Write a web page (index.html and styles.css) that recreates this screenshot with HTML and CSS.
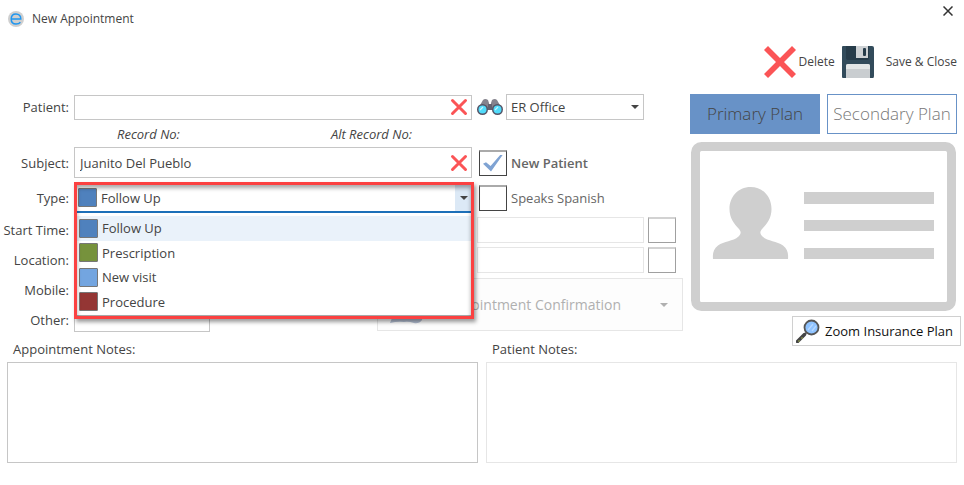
FILE: index.html
```html
<!DOCTYPE html>
<html lang="en">
<head>
<meta charset="utf-8">
<title>New Appointment</title>
<link rel="stylesheet" href="styles.css">
</head>
<body>
<svg class="defs" width="0" height="0" aria-hidden="true">
  <symbol id="cross" viewBox="0 0 32 32"><path d="M4 0 16 12 28 0 32 4 20 16 32 28 28 32 16 20 4 32 0 28 12 16 0 4Z" fill="#fb5456"/></symbol>
  <symbol id="cross-round" viewBox="0 0 18 18"><path d="M2.500 2.500 15.500 15.500M15.500 2.500 2.500 15.500" fill="none" stroke="#fb5456" stroke-width="3" stroke-linecap="round"/></symbol>
</svg>
<header class="titlebar">
  <svg class="logo" width="16" height="16" viewBox="0 0 16 16" aria-hidden="true"><circle cx="8" cy="8" r="8" fill="#cfcfcf"/><path d="M3.200 8H12.800C12.800 4.900 10.900 3 8 3 5.100 3 3.200 5.100 3.200 8 3.200 11 5.100 13 8 13 10 13 11.500 12.400 12.400 11.200" fill="none" stroke="#1e96f0" stroke-width="1.500"/></svg>
  <h1 class="title">New Appointment</h1>
  <button class="close" type="button" aria-label="Close"><svg width="10" height="10" viewBox="0 0 10 10"><path d="M.5.5 9.500 9.500M9.500.5.5 9.500" stroke="#333" stroke-width="1.500"/></svg></button>
</header>
<div class="toolbar">
  <button class="tool" type="button"><svg width="32" height="32"><use href="#cross"/></svg><span>Delete</span></button>
  <button class="tool tool-save" type="button"><svg width="32" height="32" viewBox="0 0 32 32"><path d="M1 0H30Q32 0 32 2V30Q32 32 31 32H1Q0 32 0 31V1Q0 0 1 0Z" fill="#324b5b"/><path d="M4 0H27V12Q27 14 25 14H6Q4 14 4 12Z" fill="#273c4a"/><path d="M14 0H26V12H14Z" fill="#ced2d5"/><rect x="21" y="2" width="3" height="8" rx="1" fill="#273c4a"/><path d="M4 32V20Q4 18 6 18H26Q28 18 28 20V32Z" fill="#c9cdd0"/><path d="M4 23V20Q4 18 6 18H26Q28 18 28 20V23Z" fill="#e3e6e7"/></svg><span>Save &amp; Close</span></button>
</div>
<main class="main">
  <form class="form">
    <label class="label" for="patient">Patient:</label>
    <div class="field low">
      <input class="input" id="patient" type="text">
      <button class="clear" type="button" aria-label="Clear patient"><svg width="18" height="18"><use href="#cross-round"/></svg></button>
    </div>
    <div class="side side-office">
      <button class="find" type="button" aria-label="Find patient"><svg width="26" height="18" viewBox="0 0 26 18"><path d="M2 9 6 2Q8 0 11 2L12 5V12H2ZM24 9 20 2Q18 0 15 2L14 5V12H24Z" fill="#85838d"/><path d="M11 6H15V12H11Z" fill="#64616f"/><circle cx="5.500" cy="11.500" r="5.500" fill="#545365"/><circle cx="20.500" cy="11.500" r="5.500" fill="#545365"/><circle cx="5.500" cy="11.500" r="4" fill="#51dbfa"/><circle cx="20.500" cy="11.500" r="4" fill="#51dbfa"/><path d="M3 12 6 9M18 12 21 9" stroke="#c4f5ff" stroke-width="1.300"/></svg></button>
      <div class="pick">
        <select class="input" aria-label="Office"><option>ER Office</option></select>
        <i class="caret"></i>
      </div>
    </div>

    <div class="records"><span>Record No:</span><span>Alt Record No:</span></div>

    <label class="label" for="subject">Subject:</label>
    <div class="field">
      <input class="input" id="subject" type="text" value="Juanito Del Pueblo">
      <button class="clear" type="button" aria-label="Clear subject"><svg width="18" height="18"><use href="#cross-round"/></svg></button>
    </div>
    <label class="side side-check strong"><input class="check" type="checkbox" checked>New Patient</label>

    <label class="label" for="type">Type:</label>
    <div class="field type">
      <select class="type-select" id="type"><option>Follow Up</option><option>Prescription</option><option>New visit</option><option>Procedure</option></select>
      <i class="swatch blue type-swatch"></i>
      <span class="type-arrow"><i class="caret"></i></span>
      <ul class="menu" role="listbox" aria-label="Type">
        <li class="item current" role="option" aria-selected="true"><i class="swatch blue"></i>Follow Up</li>
        <li class="item" role="option"><i class="swatch green"></i>Prescription</li>
        <li class="item" role="option"><i class="swatch sky"></i>New visit</li>
        <li class="item" role="option"><i class="swatch red"></i>Procedure</li>
      </ul>
      <div class="frame"></div>
    </div>
    <label class="side side-check"><input class="check" type="checkbox">Speaks Spanish</label>

    <label class="label" for="start">Start Time:</label>
    <div class="side side-off">
      <input class="input faint" id="start" type="text" disabled>
      <input class="check off" type="checkbox" aria-label="Use start time" disabled>
    </div>

    <label class="label" for="location">Location:</label>
    <div class="side side-off">
      <input class="input faint" id="location" type="text" disabled>
      <input class="check off" type="checkbox" aria-label="Use location" disabled>
    </div>

    <label class="label row-mobile" for="mobile">Mobile:</label>
    <input class="input short row-mobile" id="mobile" type="text">

    <label class="label row-other" for="other">Other:</label>
    <input class="input short row-other" id="other" type="text">

    <button class="confirm" type="button" disabled>
      <svg width="38" height="38" viewBox="0 0 38 38"><path d="M2 37 8 22H36L34 34Q31 38 26 37 20 35 16 36 10 35 2 37Z" fill="#b4bfd3"/></svg>
      <span>Appointment Confirmation</span><i class="caret"></i>
    </button>
  </form>

  <section class="plan">
    <div class="tabs">
      <button class="tab active" type="button">Primary Plan</button>
      <button class="tab" type="button">Secondary Plan</button>
    </div>
    <svg class="card" viewBox="0 0 265 169" role="img" aria-label="Insurance card"><rect x="4.500" y="4.500" width="256" height="160" rx="6" fill="none" stroke="#cfcfcf" stroke-width="9"/><path d="M113 50H243V62H113ZM113 78H243V89H113ZM113 106H243V117H113Z" fill="#cfcfcf"/><path d="M59.500 45C72 45 80.500 55 80.500 67 80.500 76 76 82 71 87 68.500 90 69 92 71.500 94.500 77 99.500 86 99 92 103.500 96.500 107 97.500 111 97 117H22C21.500 111 22.500 107 27 103.500 33 99 42 99.500 47.500 94.500 50 92 50.500 90 48 87 43 82 38.500 76 38.500 67 38.500 55 47 45 59.500 45Z" fill="#cfcfcf"/></svg>
    <button class="zoom" type="button"><svg width="24" height="24" viewBox="0 0 24 24"><path d="M11 13 7.500 16.500" stroke="#777" stroke-width="2"/><path d="M8.500 15.500 1.500 22.500" stroke="#454545" stroke-width="3.500" stroke-linecap="round"/><path d="M5.500 18.500 6.500 19.500M2.500 21.500 3.500 22.500" stroke="#9aa84a" stroke-width="1.500"/><circle cx="15.500" cy="8.500" r="7" fill="#8fc3ff" stroke="#555" stroke-width="1.800"/><path d="M12 11 17 5M16 12 20 7" stroke="#b7d9ff" stroke-width="1.300"/></svg><span>Zoom Insurance Plan</span></button>
  </section>
</main>
<section class="notes">
  <div class="note"><label for="anotes">Appointment Notes:</label><textarea class="area" id="anotes"></textarea></div>
  <div class="note"><label for="pnotes">Patient Notes:</label><textarea class="area faint" id="pnotes" disabled></textarea></div>
</section>
</body>
</html>
```
FILE: styles.css
```css
* { box-sizing: border-box; }
body {
  margin: 0;
  background: #fff;
  color: #444;
  font: 13px/18px "Open Sans", "Noto Sans", sans-serif;
}
button, input, select, textarea { font: inherit; color: inherit; margin: 0; border-radius: 0; }
button { padding: 0; border: 0; background: none; }
svg { display: block; flex: none; }
.defs { position: absolute; }

.titlebar { display: flex; align-items: center; height: 37px; padding: 0 11px 0 8px; }
.title { margin: 0 auto 0 8px; font-size: 12px; font-weight: 400; }
.close { align-self: flex-start; padding-top: 6px; }

.toolbar { display: flex; justify-content: flex-end; gap: 7px; padding: 9px 7px 16px 0; font-size: 12px; }
.tool { display: flex; align-items: center; gap: 3px; }
.tool-save { gap: 12px; }

.main { display: grid; grid-template-columns: minmax(0, 1fr) 267px; gap: 7px; padding-right: 7px; }

.form {
  display: grid;
  grid-template-columns: 69px minmax(0, 1fr) 206px;
  grid-template-rows: 26px 19px 31px 31px 26px 26px 26px 25px;
  column-gap: 5px;
  row-gap: 4px;
  align-content: start;
}
.label { grid-column: 1; align-self: center; justify-self: end; white-space: nowrap; }
.field { grid-column: 2; position: relative; display: flex; }
.low { padding-top: 1px; }
.side { grid-column: 3; display: flex; align-items: center; }
.input { width: 100%; min-width: 0; height: 100%; padding: 0 5px; border: 1px solid #c6c6c6; background: #fff; appearance: none; outline: 0; }
.faint { border-color: #e6e6e6; }
.clear { position: absolute; right: 4px; top: 50%; margin-top: -9px; }
.caret { width: 0; height: 0; border: 4px solid transparent; border-top-color: #444; border-bottom: 0; }

.side-office { gap: 3px; }
.pick { position: relative; width: 138px; height: 26px; }
.pick .input { padding: 0 4px; }
.pick .caret { position: absolute; right: 5px; top: 11px; }

.records { grid-column: 2; display: flex; align-items: center; font-style: italic; gap: 151px; padding-left: 43px; white-space: nowrap; }

.side-check { gap: 4px; padding-left: 2px; color: #666; white-space: nowrap; }
.strong { font-weight: 600; }
.check {
  flex: none;
  width: 28px;
  height: 26px;
  appearance: none;
  border: 1px solid #444;
  border-top: 2px solid #aaa;
  background: #fff;
}
.check:checked::before {
  content: "";
  display: block;
  width: 20px;
  height: 17px;
  margin: 3px;
  background: #7fa3d3;
  clip-path: polygon(0 55%, 15% 45%, 38% 68%, 88% 0, 100% 0, 40% 100%);
}
.off { border-color: #a0a0a0; border-top-color: #d2d2d2; }

.type { padding: 2px 0 0 2px; }
.type-select { width: 100%; padding: 0 25px; border: 0; border-bottom: 2px solid #1c6fb8; background: #fff; appearance: none; outline: 0; }
.swatch { flex: none; width: 19px; height: 19px; border: 1px solid #777; border-radius: 1px; }
.blue { background: #4f81bd; }
.green { background: #76923c; }
.sky { background: #73a5e0; }
.red { background: #943634; }
.type-swatch { position: absolute; left: 4px; top: 6px; }
.type-arrow { position: absolute; right: 0; top: 2px; bottom: 2px; width: 17px; display: flex; align-items: center; justify-content: center; background: #dce9f6; }
.menu {
  position: absolute;
  z-index: 1;
  left: 2px;
  right: 0;
  top: 100%;
  height: 103px;
  margin: 0;
  padding: 3px 0 1px;
  display: flex;
  flex-direction: column;
  list-style: none;
  background: #fff;
  border-bottom: 1px solid #aaa;
}
.item { flex: 1; display: flex; align-items: center; gap: 4px; padding-left: 3px; }
.current { background: #eaf2fa; }
.frame {
  position: absolute;
  z-index: 2;
  left: 0;
  right: -2px;
  top: 0;
  height: 137px;
  border: 3px solid #fb4141;
  box-shadow: 2px 3px 4px rgba(0, 0, 0, .4), inset 0 3px 4px rgba(0, 0, 0, .35);
  pointer-events: none;
}

.side-off { gap: 4px; }
.side-off .input { width: 167px; }
.short { grid-column: 2; width: 136px; }
.row-mobile { grid-row: 7; }
.row-other { grid-row: 8; }

.confirm {
  grid-column: 2 / 4;
  grid-row: 7 / 9;
  justify-self: end;
  align-self: center;
  display: flex;
  align-items: center;
  width: 306px;
  height: 53px;
  padding: 0 14px 0 10px;
  border: 1px solid #e6e6e6;
  background: #fdfdfd;
  color: #b0b0b0;
  font-size: 14px;
}
.confirm span { margin-left: auto; }
.confirm .caret { margin-left: 39px; border-top-color: #b0b0b0; }

.plan { display: flex; flex-direction: column; }
.tabs { display: grid; grid-template-columns: 1fr 1fr; gap: 7px; }
.tab { height: 40px; border: 1px solid #6892c7; color: #777; font-size: 17px; font-weight: 300; white-space: nowrap; }
.active { background: #6892c7; color: #444; }
.card { width: 265px; margin: 8px auto 5px; }
.zoom {
  display: flex;
  align-items: center;
  align-self: flex-end;
  gap: 5px;
  height: 30px;
  margin: 0 -4px -8px 0;
  padding: 0 7px 0 3px;
  border: 1px solid #d0d0d0;
  background: #fff;
  color: #111;
}

.notes { display: grid; grid-template-columns: 1fr 1fr; gap: 8px; padding: 0 7px; }
.note { display: flex; flex-direction: column; gap: 2px; line-height: 22px; }
.note label { padding-left: 6px; }
.area { height: 101px; border: 1px solid #c6c6c6; background: #fff; resize: none; outline: 0; }
.area.faint { border-color: #e6e6e6; }
```
